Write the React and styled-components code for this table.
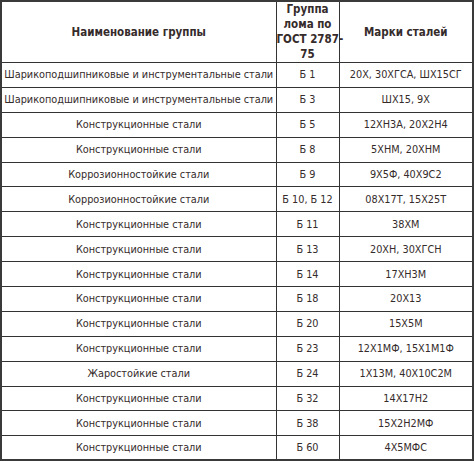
import styled, { createGlobalStyle } from "styled-components";

const GlobalStyle = createGlobalStyle`
  html, body {
    margin: 0;
    padding: 0;
    background: #ffffff;
  }
`;

const rows = [
  ["Шарикоподшипниковые и инструментальные стали", "Б 1", "20Х, 30ХГСА, ШХ15СГ"],
  ["Шарикоподшипниковые и инструментальные стали", "Б 3", "ШХ15, 9Х"],
  ["Конструкционные стали", "Б 5", "12ХН3А, 20Х2Н4"],
  ["Конструкционные стали", "Б 8", "5ХНМ, 20ХНМ"],
  ["Коррозионностойкие стали", "Б 9", "9Х5Ф, 40Х9С2"],
  ["Коррозионностойкие стали", "Б 10, Б 12", "08Х17Т, 15Х25Т"],
  ["Конструкционные стали", "Б 11", "38ХМ"],
  ["Конструкционные стали", "Б 13", "20ХН, 30ХГСН"],
  ["Конструкционные стали", "Б 14", "17ХН3М"],
  ["Конструкционные стали", "Б 18", "20Х13"],
  ["Конструкционные стали", "Б 20", "15Х5М"],
  ["Конструкционные стали", "Б 23", "12Х1МФ, 15Х1М1Ф"],
  ["Жаростойкие стали", "Б 24", "1Х13М, 40Х10С2М"],
  ["Конструкционные стали", "Б 32", "14Х17Н2"],
  ["Конструкционные стали", "Б 38", "15Х2Н2МФ"],
  ["Конструкционные стали", "Б 60", "4Х5МФС"],
];

const App = () => {
  return (
    <>
      <GlobalStyle />
      <Table>
        <colgroup>
          <col style={{ width: 275 }} />
          <col style={{ width: 63 }} />
          <col />
        </colgroup>
        <thead>
          <tr>
            <HeadCell>Наименование группы</HeadCell>
            <HeadCell $tight>
              Группа
              <br />
              лома по
              <br />
              ГОСТ 2787-
              <br />
              75
            </HeadCell>
            <HeadCell>Марки сталей</HeadCell>
          </tr>
        </thead>
        <tbody>
          {rows.map(([name, group, grades], i) => (
            <Row key={i}>
              <Cell>{name}</Cell>
              <Cell>{group}</Cell>
              <Cell>{grades}</Cell>
            </Row>
          ))}
        </tbody>
      </Table>
    </>
  );
};

export default App;

const Table = styled.table`
  width: 474px;
  height: 461px;
  border-collapse: collapse;
  table-layout: fixed;
  border-top: 2px solid #3a3a3a;
  border-left: 2px solid #3a3a3a;
  border-right: 2px solid #3a3a3a;
  border-bottom: 3px solid #3a3a3a;
  font-family: "DejaVu Sans Condensed", "DejaVu Sans", sans-serif;
  font-size: 10.8px;
  color: #352b2b;
`;

const HeadCell = styled.th`
  height: 58px;
  padding: 0 ${(p) => (p.$tight ? "0" : "2px")};
  border: 1px solid #333;
  font-weight: bold;
  font-size: 11.5px;
  line-height: 15px;
  text-align: center;
  vertical-align: middle;
  white-space: nowrap;
  overflow: visible;
`;

const Row = styled.tr`
  height: 24.9px;
`;

const Cell = styled.td`
  padding: 0 2px;
  border: 1px solid #333;
  text-align: center;
  vertical-align: middle;
  white-space: nowrap;
  line-height: 15px;
`;
